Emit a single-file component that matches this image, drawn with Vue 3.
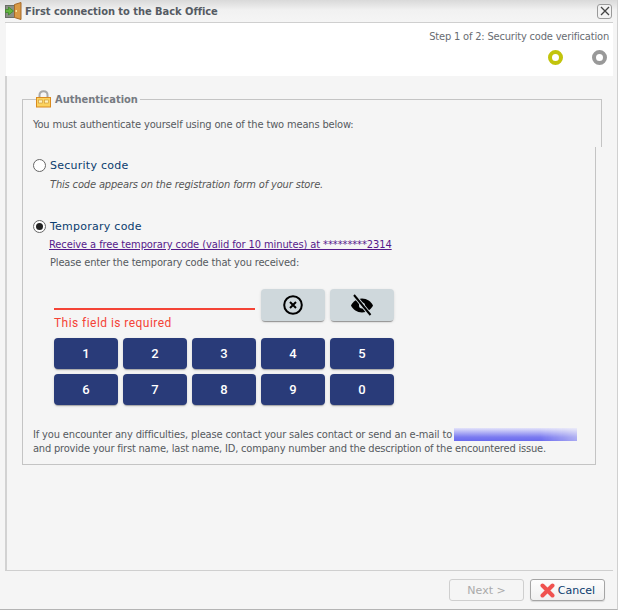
<script setup>
const keys = ['1','2','3','4','5','6','7','8','9','0']
</script>

<template>
  <div class="window">
    <header class="titlebar">
      <svg class="door" width="17" height="18" viewBox="0 0 17 18">
        <rect x="0.500" y="3.500" width="9" height="12" fill="#8b8f86" stroke="#6b6f68"/>
        <path d="M9.500 2.500 16 .5V17.500L9.500 15.500Z" fill="#d99a45" stroke="#a5692a"/>
        <path d="M.5 7.500H3.500V5L8.500 9 3.500 13V10.500H.5Z" fill="#63b53f" stroke="#3d8a28" stroke-width=".8"/>
        <rect x="10.500" y="8" width="1.500" height="2" fill="#fbe3a0"/>
      </svg>
      <span class="title">First connection to the Back Office</span>
      <button class="close" aria-label="Close">
        <svg width="10" height="10" viewBox="0 0 10 10"><path d="M1 1 9 9M9 1 1 9" stroke="#444" stroke-width="1.300"/></svg>
      </button>
    </header>

    <div class="panel">
      <section class="steps">
        <p class="step-text">Step 1 of 2: Security code verification</p>
        <div class="rings">
          <span class="ring active"></span>
          <span class="ring"></span>
        </div>
      </section>

      <main class="body">
        <fieldset class="top">
          <legend>
            <svg width="15" height="18" viewBox="0 0 15 18">
              <path d="M3.500 8V5C3.500 2.800 5.200 1.200 7.500 1.200S11.500 2.800 11.500 5V8" fill="none" stroke="#a9a9a9" stroke-width="2"/>
              <rect x="0.500" y="7.500" width="14" height="9.500" fill="#fbd25f" stroke="#d98a1f"/>
              <rect x="2.500" y="10" width="4" height="3" fill="#fff3c0" stroke="#c9912d" stroke-width=".6"/>
              <rect x="8.500" y="10" width="4" height="3" fill="#fff3c0" stroke="#c9912d" stroke-width=".6"/>
            </svg>
            <span>Authentication</span>
          </legend>
          <p class="intro">You must authenticate yourself using one of the two means below:</p>
        </fieldset>

        <div class="lower">
          <label class="option">
            <span class="radio"></span>
            <span class="option-label">Security code</span>
          </label>
          <p class="hint">This code appears on the registration form of your store.</p>

          <label class="option second">
            <span class="radio checked"></span>
            <span class="option-label">Temporary code</span>
          </label>
          <a class="link" href="#">Receive a free temporary code (valid for 10 minutes) at *********2314</a>
          <p class="enter">Please enter the temporary code that you received:</p>

          <div class="code">
            <div class="entry">
              <div class="field">
                <div class="underline"></div>
                <div class="error">This field is required</div>
              </div>
              <button class="tool" aria-label="Clear">
                <svg width="22" height="22" viewBox="0 0 22 22">
                  <circle cx="11" cy="11" r="8.800" fill="none" stroke="#000" stroke-width="2"/>
                  <path d="M8 8 14 14M14 8 8 14" stroke="#000" stroke-width="2"/>
                </svg>
              </button>
              <button class="tool" aria-label="Hide">
                <svg width="24" height="24" viewBox="0 0 24 24">
                  <path d="M12 5.500C17 5.500 21 8.500 23 12.500 21 16.500 17 19.500 12 19.500S3 16.500 1 12.500C3 8.500 7 5.500 12 5.500Z" fill="#000"/>
                  <circle cx="12" cy="12.500" r="3" fill="#cfd8dc"/>
                  <path d="M4.500 2.500 20 21.500" stroke="#cfd8dc" stroke-width="4"/>
                  <path d="M4 2 20.500 22" stroke="#000" stroke-width="2"/>
                </svg>
              </button>
            </div>
            <div class="keypad">
              <button v-for="k in keys" :key="k" class="key">{{ k }}</button>
            </div>
          </div>

          <p class="help">
            If you encounter any difficulties, please contact your sales contact or send an e-mail to <span class="redacted"></span><br>
            <span class="tight">and provide your first name, last name, ID, company number and the description of the encountered issue.</span>
          </p>
        </div>
      </main>
    </div>

    <footer class="footer">
      <button class="btn disabled" disabled>Next &gt;</button>
      <button class="btn">
        <svg width="15" height="15" viewBox="0 0 15 15"><path d="M2.500 2.500 12.500 12.500M12.500 2.500 2.500 12.500" stroke="#f0524f" stroke-width="4" stroke-linecap="round"/></svg>
        <span class="cancel">Cancel</span>
      </button>
    </footer>
  </div>
</template>

<style>
html, body { margin: 0; background: #f5f5f5; }
</style>

<style scoped>
* { box-sizing: border-box; }
p { margin: 0; }
button { font: inherit; padding: 0; cursor: pointer; }
.window {
  width: 618px; height: 610px;
  display: flex; flex-direction: column;
  background: #f5f5f5;
  border-right: 1px solid #d0d0d0;
  border-bottom: 1px solid #b4b4b4;
  font-family: "DejaVu Sans Condensed", "DejaVu Sans", sans-serif;
  font-size: 11px; color: #555; letter-spacing: -.15px;
}
.titlebar {
  height: 22px; flex: none;
  display: flex; align-items: center;
  padding: 0 5px 0 5px;
  background: linear-gradient(#d9d9d9, #f1f1f1 10px, #f5f5f5);
}
.door { margin-right: 3px; flex: none; }
.title { font-weight: bold; font-size: 11px; color: #555b63; letter-spacing: -.03px; }
.close {
  margin-left: auto; width: 15px; height: 15px;
  display: flex; align-items: center; justify-content: center;
  background: #f3f3f3; border: 1px solid #9a9a9a; border-radius: 3px;
}
.panel {
  flex: 1; margin: 0 4px 0 5px;
  display: flex; flex-direction: column;
  border-top: 1px solid #cfcfcf;
  border-bottom: 1px solid #cfcfcf;
}
.steps {
  height: 53px; flex: none; background: #fff; margin-left: 1px;
  padding: 7px 4px 0 0; text-align: right;
}
.step-text { line-height: 14px; color: #686c72; letter-spacing: -.18px; }
.rings { display: flex; justify-content: flex-end; gap: 29px; margin-top: 6px; padding-right: 2px; }
.ring { width: 15px; height: 15px; border-radius: 50%; border: 4px solid #999; background: #fff; }
.ring.active { border-color: #c2c40c; }
.body {
  flex: 1; border-left: 2px solid #d2d2d2;
  padding: 14px 17px 0 15px;
}
.top {
  margin: 0 -6px 0 0; padding: 0 0 0 10px; height: 57px;
  border: 1px solid #c4c4c4; border-bottom: 0; min-width: 0;
}
.top legend {
  padding: 0 2px 0 0; margin-left: 3px;
  display: flex; align-items: center; gap: 4px;
  font-weight: bold; color: #777b82; letter-spacing: 0;
}
.intro { line-height: 14px; margin-top: 10px; color: #555a60; }
.lower {
  height: 318px;
  border: 1px solid #c4c4c4; border-top: 0;
  padding: 11px 0 0 10px;
}
.option { display: flex; align-items: center; height: 14px; gap: 4px; }
.second { margin-top: 27px; }
.radio {
  width: 13px; height: 13px; border-radius: 50%; flex: none;
  border: 1px solid #666; background: #fff;
  display: flex; align-items: center; justify-content: center;
}
.radio.checked::after { content: ""; width: 7px; height: 7px; border-radius: 50%; background: #222; }
.option-label { font-family: "DejaVu Sans", sans-serif; color: #0a3c6e; font-size: 11px; letter-spacing: .25px; }
.hint { margin: 6px 0 0 17px; font-style: italic; line-height: 14px; color: #555; }
.link { display: block; margin: 5px 0 0 16px; line-height: 14px; color: #551a8b; letter-spacing: -.09px; }
.enter { margin: 4px 0 0 17px; line-height: 14px; color: #555a60; }
.code { margin: 19px 0 0 21px; width: 340px; }
.entry { display: flex; gap: 5px; height: 32px; }
.field { width: 201px; margin-right: 1px; padding-top: 19px; }
.underline { height: 2px; background: #f44336; }
.error { margin-top: 6px; font-family: Roboto, sans-serif; font-size: 12px; line-height: 14px; letter-spacing: .45px; color: #f44336; white-space: nowrap; }
.tool {
  width: 64px; height: 32px; border: 0; border-radius: 4px;
  background: #cfd8dc;
  display: flex; align-items: center; justify-content: center;
  box-shadow: 0 2px 1px -1px rgba(0,0,0,.35), 0 1px 3px rgba(0,0,0,.12);
}
.keypad {
  display: grid; grid-template-columns: repeat(5, 64px); gap: 5px;
  grid-auto-rows: 31px; margin-top: 17px;
}
.key {
  border: 0; border-radius: 4px; background: #293b79; color: #fff;
  font-family: Roboto, sans-serif; font-weight: 500; font-size: 13px; letter-spacing: 0;
  box-shadow: 0 2px 1px -1px rgba(0,0,0,.25), 0 1px 3px rgba(0,0,0,.14);
}
.help { margin-top: 23px; line-height: 14px; white-space: nowrap; color: #555a60; }
.tight { letter-spacing: -.19px; }
.redacted {
  display: inline-block; width: 123px; height: 13px; vertical-align: -3px; margin-left: -1px;
  background: linear-gradient(180deg, #e3e3fa, #7b7bf0 70%, #6a6aee);
  -webkit-mask-image: linear-gradient(90deg, #000 70%, rgba(0,0,0,.55));
  mask-image: linear-gradient(90deg, #000 70%, rgba(0,0,0,.55));
}
.footer {
  height: 38px; flex: none; display: flex; justify-content: flex-end; align-items: flex-start;
  gap: 6px; padding: 8px 12px 0 0;
}
.btn {
  width: 75px; height: 22px; display: flex; align-items: center; justify-content: center; gap: 3px;
  background: linear-gradient(#fdfdfd, #f0f0f0); border: 1px solid #a5a5a5; border-radius: 3px;
  font-family: "DejaVu Sans", sans-serif; font-size: 11px; color: #0a3c6e; letter-spacing: 0;
  box-shadow: 0 1px 1px rgba(0,0,0,.12);
}
.btn.disabled { background: #f5f5f5; border-color: #cfcfcf; color: #aaa; box-shadow: none; cursor: default; }
.cancel { color: #0a3c6e; }
</style>
